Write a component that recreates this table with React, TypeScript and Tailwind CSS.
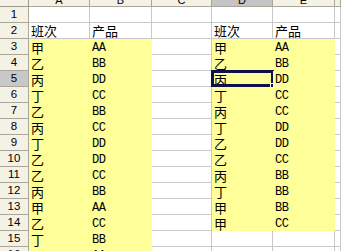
import React from "react";

type Row = { n: number; a?: string; b?: string; d?: string; e?: string };

const left: [string, string][] = [
  ["甲", "AA"], ["乙", "BB"], ["丙", "DD"], ["丁", "CC"], ["乙", "BB"],
  ["丙", "CC"], ["丁", "DD"], ["乙", "DD"], ["乙", "CC"], ["丙", "BB"],
  ["甲", "AA"], ["乙", "CC"], ["丁", "BB"], ["丁", "AA"],
];
const right: [string, string][] = [
  ["甲", "AA"], ["乙", "BB"], ["丙", "DD"], ["丁", "CC"], ["丙", "CC"],
  ["丁", "DD"], ["乙", "DD"], ["乙", "CC"], ["丙", "BB"], ["丁", "BB"],
  ["甲", "BB"], ["甲", "CC"],
];

const rows: Row[] = Array.from({ length: 16 }, (_, i) => {
  const n = i + 1;
  const r: Row = { n };
  if (n === 2) {
    r.a = "班次"; r.b = "产品"; r.d = "班次"; r.e = "产品";
  }
  if (n >= 3) {
    const l = left[n - 3];
    if (l) { r.a = l[0]; r.b = l[1]; }
    const rr = right[n - 3];
    if (rr) { r.d = rr[0]; r.e = rr[1]; }
  }
  return r;
});

const cjk = "font-['Noto_Sans_CJK_SC',sans-serif] text-[13px] leading-[14px]";
const latin = "font-['Liberation_Mono',monospace] text-[12px] leading-[14px] tracking-[-0.5px]";

function Cell({
  text,
  yellow,
  children,
}: {
  text?: string;
  yellow: boolean;
  children?: React.ReactNode;
}) {
  const base = yellow
    ? "bg-[#ffff99]"
    : "bg-white border-r border-b border-[#c8c8c8]";
  const isCjk = !!text && /[^\x00-\x7f]/.test(text);
  return (
    <div className={`relative h-[16px] flex items-end pl-[2px] ${base}`}>
      <span className={`${isCjk ? cjk : latin} text-black whitespace-nowrap`}>{text}</span>
      {children}
    </div>
  );
}

export default function App() {
  const cols = ["A", "B", "C", "D", "E", ""];
  return (
    <div className="w-[341px] h-[251px] overflow-hidden bg-white">
      <div className="grid grid-cols-[29px_61px_62px_60px_61px_62px_1fr]">
        {/* column header strip, scrolled so only its lower edge shows */}
        <div className="h-[7px] bg-[#f4f2e4] border-r border-b border-[#9c9a8c]" />
        {cols.map((c, i) => (
          <div
            key={i}
            className={`h-[7px] overflow-hidden flex justify-center border-r border-b border-[#a9a79a] ${
              c === "D" ? "bg-[#c4c4c4]" : "bg-[#f4f2e4]"
            }`}
          >
            <span className="-mt-[5px] font-['Liberation_Sans',sans-serif] text-[11px] leading-[11px] text-black">
              {c}
            </span>
          </div>
        ))}

        {rows.map((r) => {
          const yl = r.n >= 3;
          const yr = r.n >= 3 && r.n <= 14;
          return (
            <React.Fragment key={r.n}>
              <div
                className={`h-[16px] flex items-center justify-center border-r border-b border-[#a9a79a] font-['Liberation_Sans',sans-serif] text-[11.5px] text-black ${
                  r.n === 5 ? "bg-[#c8c8c8]" : "bg-[#f4f2e4]"
                }`}
              >
                {r.n}
              </div>
              <Cell text={r.a} yellow={yl} />
              <Cell text={r.b} yellow={yl} />
              <Cell yellow={false} />
              <Cell text={r.d} yellow={yr}>
                {r.n === 5 && (
                  <>
                    <div className="absolute -left-[1px] -top-[1px] -right-[1px] bottom-0 border-[3px] border-[#10104c] pointer-events-none" />
                    <div className="absolute -right-[3px] -bottom-[2px] w-[5px] h-[5px] bg-[#10104c] outline outline-1 outline-white" />
                  </>
                )}
              </Cell>
              <Cell text={r.e} yellow={yr} />
              <Cell yellow={false} />
            </React.Fragment>
          );
        })}
      </div>
    </div>
  );
}
